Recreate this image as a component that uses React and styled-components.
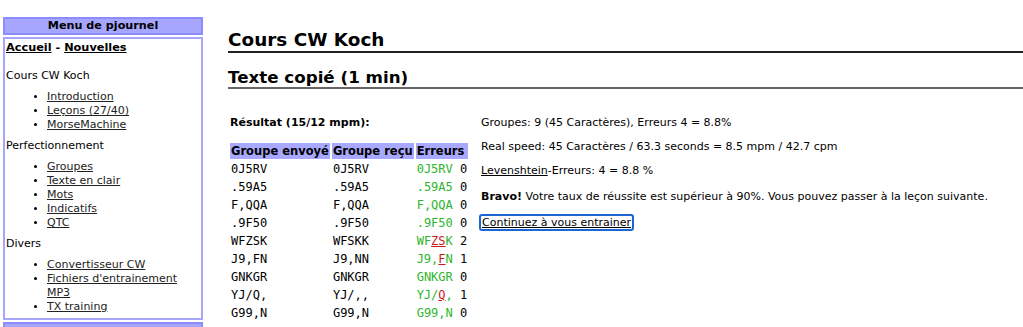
import React from "react";
import styled, { createGlobalStyle } from "styled-components";

const Global = createGlobalStyle`
  html, body { margin: 0; padding: 0; background: #fff; }
  body { font-family: "DejaVu Sans", Verdana, sans-serif; font-size: 11px; color: #000; }
`;

const Page = styled.div`
  display: flex;
  align-items: flex-start;
  width: 1023px;
  height: 327px;
  overflow: hidden;
`;

const Sidebar = styled.nav`
  width: 200px;
  margin: 17px 0 0 3px;
  flex-shrink: 0;
  display: flex;
  flex-direction: column;
  gap: 2px;
`;

const MenuTitle = styled.div`
  background: #a6a6ff;
  border: 2px solid #8c8cff;
  font-weight: bold;
  font-size: 11.2px;
  text-align: center;
  height: 14px;
  line-height: 14px;
`;

const MenuBox = styled.div`
  border: 2px solid #a6a6ff;
  padding: 1px 1px 8px 1px;
  height: 270px;
`;

const NextBox = styled.div`
  border: 2px solid #8c8cff;
  background: #a6a6ff;
  height: 20px;
`;

const TopLinks = styled.div`
  font-weight: bold;
  font-size: 11.3px;
  line-height: 16px;
  margin-bottom: 13px;
`;

const StrongLink = styled.a`
  color: #000;
  text-decoration: underline;
`;

const Section = styled.div`
  line-height: 14px;
  margin: 0 0 7px 0;
`;

const List = styled.ul`
  margin: 0 0 7px 0;
  padding-left: 41px;
  line-height: 14px;
  li::marker { font-size: 10px; }
`;

const MenuLink = styled.a`
  color: #222;
  text-decoration: underline;
`;

const Main = styled.main`
  flex: 1;
  margin-left: 25px;
  padding-top: 29px;
`;

const H1 = styled.h1`
  margin: 0;
  font-size: 18.4px;
  line-height: 22px;
  font-weight: bold;
  border-bottom: 2px solid #222;
`;

const H2 = styled.h2`
  margin: 14px 0 0 0;
  font-size: 16.7px;
  line-height: 20px;
  font-weight: bold;
  border-bottom: 2px solid #666;
`;

const Result = styled.div`
  display: flex;
  margin-top: 27px;
  padding-left: 2px;
`;

const TableCol = styled.div`
  width: 251px;
  flex-shrink: 0;
`;

const ResultTitle = styled.div`
  font-weight: bold;
  line-height: 14px;
  margin-bottom: 11px;
`;

const Table = styled.table`
  border-collapse: separate;
  border-spacing: 2px 2px;
  margin-left: -2px;
  th {
    background: #a8a8ff;
    font-weight: bold;
    font-size: 11.5px;
    text-align: left;
    padding: 1px 1px;
    line-height: 14px;
    white-space: nowrap;
  }
  td {
    font-family: "DejaVu Sans Mono", Monaco, monospace;
    font-size: 12px;
    line-height: 16px;
    padding: 0 1px;
    white-space: nowrap;
  }
`;

const ErrCell = styled.td`
  text-align: right;
`;

const Ok = styled.span`
  color: #2db52d;
`;

const Bad = styled.span`
  color: #c81e1e;
  text-decoration: underline;
`;

const Info = styled.div`
  display: flex;
  flex-direction: column;
  line-height: 14px;
`;

const InfoLine = styled.p`
  margin: 0 0 ${(p) => p.$gap}px 0;
  white-space: nowrap;
`;

const PlainLink = styled.a`
  color: #000;
  text-decoration: underline;
`;

const ContinueButton = styled.a`
  align-self: flex-start;
  color: #000;
  text-decoration: underline;
  border: 2px solid #1a66d2;
  border-radius: 3px;
  padding: 0 1px 0 1px;
  margin-left: -2px;
  line-height: 13px;
`;

const rows = [
  ["0J5RV", "0J5RV", [["0J5RV", false]], 0],
  [".59A5", ".59A5", [[".59A5", false]], 0],
  ["F,QQA", "F,QQA", [["F,QQA", false]], 0],
  [".9F50", ".9F50", [[".9F50", false]], 0],
  ["WFZSK", "WFSKK", [["WF", false], ["ZS", true], ["K", false]], 2],
  ["J9,FN", "J9,NN", [["J9,", false], ["F", true], ["N", false]], 1],
  ["GNKGR", "GNKGR", [["GNKGR", false]], 0],
  ["YJ/Q,", "YJ/,,", [["YJ/", false], ["Q", true], [",", false]], 1],
  ["G99,N", "G99,N", [["G99,N", false]], 0],
];

export default function App() {
  return (
    <>
      <Global />
      <Page>
        <Sidebar>
          <MenuTitle>Menu de pjournel</MenuTitle>
          <MenuBox>
            <TopLinks>
              <StrongLink href="#">Accueil</StrongLink> - <StrongLink href="#">Nouvelles</StrongLink>
            </TopLinks>
            <Section>Cours CW Koch</Section>
            <List>
              <li><MenuLink href="#">Introduction</MenuLink></li>
              <li><MenuLink href="#">Leçons (27/40)</MenuLink></li>
              <li><MenuLink href="#">MorseMachine</MenuLink></li>
            </List>
            <Section>Perfectionnement</Section>
            <List>
              <li><MenuLink href="#">Groupes</MenuLink></li>
              <li><MenuLink href="#">Texte en clair</MenuLink></li>
              <li><MenuLink href="#">Mots</MenuLink></li>
              <li><MenuLink href="#">Indicatifs</MenuLink></li>
              <li><MenuLink href="#">QTC</MenuLink></li>
            </List>
            <Section>Divers</Section>
            <List>
              <li><MenuLink href="#">Convertisseur CW</MenuLink></li>
              <li><MenuLink href="#">Fichiers d'entrainement MP3</MenuLink></li>
              <li><MenuLink href="#">TX training</MenuLink></li>
            </List>
          </MenuBox>
          <NextBox />
        </Sidebar>
        <Main>
          <H1>Cours CW Koch</H1>
          <H2>Texte copié (1 min)</H2>
          <Result>
            <TableCol>
              <ResultTitle>Résultat (15/12 mpm):</ResultTitle>
              <Table>
                <thead>
                  <tr>
                    <th>Groupe envoyé</th>
                    <th>Groupe reçu</th>
                    <th>Erreurs</th>
                  </tr>
                </thead>
                <tbody>
                  {rows.map(([sent, recv, parts, n], i) => (
                    <tr key={i}>
                      <td>{sent}</td>
                      <td>{recv}</td>
                      <ErrCell>
                        <Ok>
                          {parts.map(([t, bad], j) =>
                            bad ? <Bad key={j}>{t}</Bad> : <span key={j}>{t}</span>
                          )}
                        </Ok>{" "}
                        {n}
                      </ErrCell>
                    </tr>
                  ))}
                </tbody>
              </Table>
            </TableCol>
            <Info>
              <InfoLine $gap={10}>Groupes: 9 (45 Caractères), Erreurs 4 = 8.8%</InfoLine>
              <InfoLine $gap={10}>Real speed: 45 Caractères / 63.3 seconds = 8.5 mpm / 42.7 cpm</InfoLine>
              <InfoLine $gap={12}>
                <PlainLink href="#">Levenshtein</PlainLink>-Erreurs: 4 = 8.8 %
              </InfoLine>
              <InfoLine $gap={10}>
                <b>Bravo!</b> Votre taux de réussite est supérieur à 90%. Vous pouvez passer à la leçon suivante.
              </InfoLine>
              <ContinueButton href="#">Continuez à vous entrainer</ContinueButton>
            </Info>
          </Result>
        </Main>
      </Page>
    </>
  );
}
